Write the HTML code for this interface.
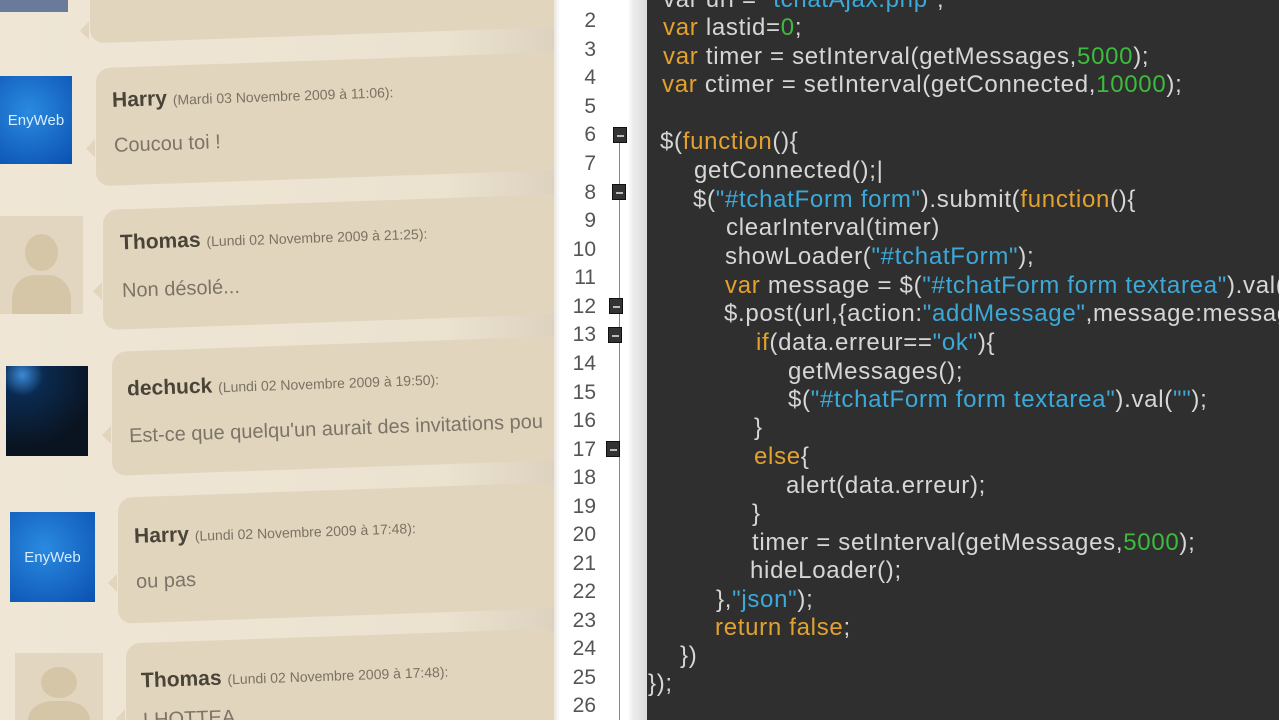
<!DOCTYPE html>
<html style="overflow:hidden;width:1279px;height:720px"><head><meta charset="utf-8"><style>
*{margin:0;padding:0;box-sizing:border-box}
body{width:1279px;height:720px;overflow:hidden;position:relative;background:#f1e9dc;font-family:"Liberation Sans",sans-serif}
.panel{position:absolute;left:0;top:0;width:554px;height:720px;overflow:hidden;background:linear-gradient(90deg,#efe6d6 0%,#ece2d0 80%,#ddd2c0 100%)}
.b{position:absolute;background:#e1d5be;border-radius:14px;transform:skewY(-2deg)}
.b:before{content:"";position:absolute;left:-10px;top:60%;border:9px solid transparent;border-right-color:#e1d5be;border-left:0}
.h{position:absolute;font-weight:bold;color:#4a4438;font-size:21px;transform:rotate(-2deg);white-space:nowrap}
.h span{font-weight:normal;font-size:14px;color:#7a7262}
.m{position:absolute;color:#7c7466;font-size:20px;transform:rotate(-2deg);white-space:nowrap}
.av{position:absolute}
.blue{background:radial-gradient(circle at 40% 40%,#2a8ae0,#0a50b0);color:#d8ecff;font-size:15px;display:flex;align-items:center;justify-content:center}
.gray{background:#e2d6c0;overflow:hidden}
.gray:before{content:"";position:absolute;left:30%;top:18%;width:40%;height:38%;background:#d6c6a8;border-radius:50%}
.gray:after{content:"";position:absolute;left:15%;top:60%;width:70%;height:60%;background:#d6c6a8;border-radius:40% 40% 0 0}
.gutter{position:absolute;left:554px;top:0;width:93px;height:720px;background:linear-gradient(90deg,#e8e4de 0px,#fff 6px,#fff 74px,#ececec 79px,#dcdcdc 93px)}
.ln{position:absolute;right:683px;font-size:21px;color:#555;text-align:right;width:40px}
.fold{position:absolute;width:14px;height:16px;background:#333;border:1px solid #111}
.fold:after{content:"";position:absolute;left:3px;top:7px;width:7px;height:2px;background:#bbb}
.vl{position:absolute;width:1px;background:#888}
.ed{position:absolute;left:647px;top:0;width:632px;height:720px;background:#2f2f2f;overflow:hidden}
.c{position:absolute;font-size:24px;color:#d6d6d6;white-space:nowrap;letter-spacing:0.7px}
.k{color:#e3a22e}.s{color:#3ba9d9}.n{color:#3dbb3d}
</style></head><body>
<div class="panel">
 <div class="b" style="left:90px;top:-20px;width:480px;height:55px"></div>
 <div class="av" style="left:0;top:0;width:68px;height:12px;background:#6a7a9a"></div>

 <div class="av blue" style="left:0;top:76px;width:72px;height:88px">EnyWeb</div>
 <div class="b" style="left:96px;top:60px;width:470px;height:118px"></div>
 <div class="h" style="left:112px;top:84px">Harry <span>(Mardi 03 Novembre 2009 à 11:06):</span></div>
 <div class="m" style="left:114px;top:133px">Coucou toi !</div>

 <div class="av gray" style="left:0;top:216px;width:83px;height:98px"></div>
 <div class="b" style="left:103px;top:202px;width:460px;height:120px"></div>
 <div class="h" style="left:120px;top:226px">Thomas <span>(Lundi 02 Novembre 2009 à 21:25):</span></div>
 <div class="m" style="left:122px;top:278px">Non désolé...</div>

 <div class="av" style="left:6px;top:366px;width:82px;height:90px;background:radial-gradient(circle at 20% 10%,#3a8ad8 0,#0a2a50 20%,#0a1420 70%)"></div>
 <div class="b" style="left:112px;top:344px;width:450px;height:124px"></div>
 <div class="h" style="left:127px;top:372px">dechuck <span>(Lundi 02 Novembre 2009 à 19:50):</span></div>
 <div class="m" style="left:129px;top:418px">Est-ce que quelqu'un aurait des invitations pou</div>

 <div class="av blue" style="left:10px;top:512px;width:85px;height:90px">EnyWeb</div>
 <div class="b" style="left:118px;top:490px;width:440px;height:126px"></div>
 <div class="h" style="left:134px;top:520px">Harry <span>(Lundi 02 Novembre 2009 à 17:48):</span></div>
 <div class="m" style="left:136px;top:570px">ou pas</div>

 <div class="av gray" style="left:15px;top:653px;width:88px;height:80px"></div>
 <div class="b" style="left:126px;top:636px;width:430px;height:110px"></div>
 <div class="h" style="left:141px;top:664px">Thomas <span>(Lundi 02 Novembre 2009 à 17:48):</span></div>
 <div class="m" style="left:143px;top:708px">LHOTTEA</div>
</div>
<div class="gutter"></div>
<div class="ed"></div>

<div class="ln" style="top:9px">2</div><div class="ln" style="top:38px">3</div><div class="ln" style="top:66px">4</div><div class="ln" style="top:95px">5</div><div class="ln" style="top:123px">6</div><div class="ln" style="top:152px">7</div><div class="ln" style="top:181px">8</div><div class="ln" style="top:209px">9</div><div class="ln" style="top:238px">10</div><div class="ln" style="top:266px">11</div><div class="ln" style="top:295px">12</div><div class="ln" style="top:323px">13</div><div class="ln" style="top:352px">14</div><div class="ln" style="top:381px">15</div><div class="ln" style="top:409px">16</div><div class="ln" style="top:438px">17</div><div class="ln" style="top:466px">18</div><div class="ln" style="top:495px">19</div><div class="ln" style="top:523px">20</div><div class="ln" style="top:552px">21</div><div class="ln" style="top:580px">22</div><div class="ln" style="top:609px">23</div><div class="ln" style="top:637px">24</div><div class="ln" style="top:666px">25</div><div class="ln" style="top:694px">26</div>
<div class="vl" style="left:619px;top:140px;height:580px"></div>
<div class="fold" style="left:613px;top:127px"></div><div class="fold" style="left:612px;top:184px"></div><div class="fold" style="left:609px;top:298px"></div><div class="fold" style="left:608px;top:327px"></div><div class="fold" style="left:606px;top:441px"></div>

<div class="c" style="left:663px;top:-14px">var url = <span class="s">"tchatAjax.php"</span>;</div>
<div class="c" style="left:663px;top:14px"><span class="k">var</span> lastid=<span class="n">0</span>;</div>
<div class="c" style="left:663px;top:43px"><span class="k">var</span> timer = setInterval(getMessages,<span class="n">5000</span>);</div>
<div class="c" style="left:662px;top:71px"><span class="k">var</span> ctimer = setInterval(getConnected,<span class="n">10000</span>);</div>
<div class="c" style="left:660px;top:128px">$(<span class="k">function</span>(){</div>
<div class="c" style="left:694px;top:157px">getConnected();|</div>
<div class="c" style="left:693px;top:186px">$(<span class="s">"#tchatForm form"</span>).submit(<span class="k">function</span>(){</div>
<div class="c" style="left:726px;top:214px">clearInterval(timer)</div>
<div class="c" style="left:725px;top:243px">showLoader(<span class="s">"#tchatForm"</span>);</div>
<div class="c" style="left:725px;top:272px"><span class="k">var</span> message = $(<span class="s">"#tchatForm form textarea"</span>).val(</div>
<div class="c" style="left:724px;top:300px">$.post(url,{action:<span class="s">"addMessage"</span>,message:message</div>
<div class="c" style="left:756px;top:329px"><span class="k">if</span>(data.erreur==<span class="s">"ok"</span>){</div>
<div class="c" style="left:788px;top:358px">getMessages();</div>
<div class="c" style="left:788px;top:386px">$(<span class="s">"#tchatForm form textarea"</span>).val(<span class="s">""</span>);</div>
<div class="c" style="left:754px;top:414px">}</div>
<div class="c" style="left:754px;top:443px"><span class="k">else</span>{</div>
<div class="c" style="left:786px;top:472px">alert(data.erreur);</div>
<div class="c" style="left:752px;top:500px">}</div>
<div class="c" style="left:752px;top:529px">timer = setInterval(getMessages,<span class="n">5000</span>);</div>
<div class="c" style="left:750px;top:557px">hideLoader();</div>
<div class="c" style="left:716px;top:586px">},<span class="s">"json"</span>);</div>
<div class="c" style="left:715px;top:614px"><span class="k">return false</span>;</div>
<div class="c" style="left:680px;top:642px">})</div>
<div class="c" style="left:648px;top:670px">});</div>
</body></html>
